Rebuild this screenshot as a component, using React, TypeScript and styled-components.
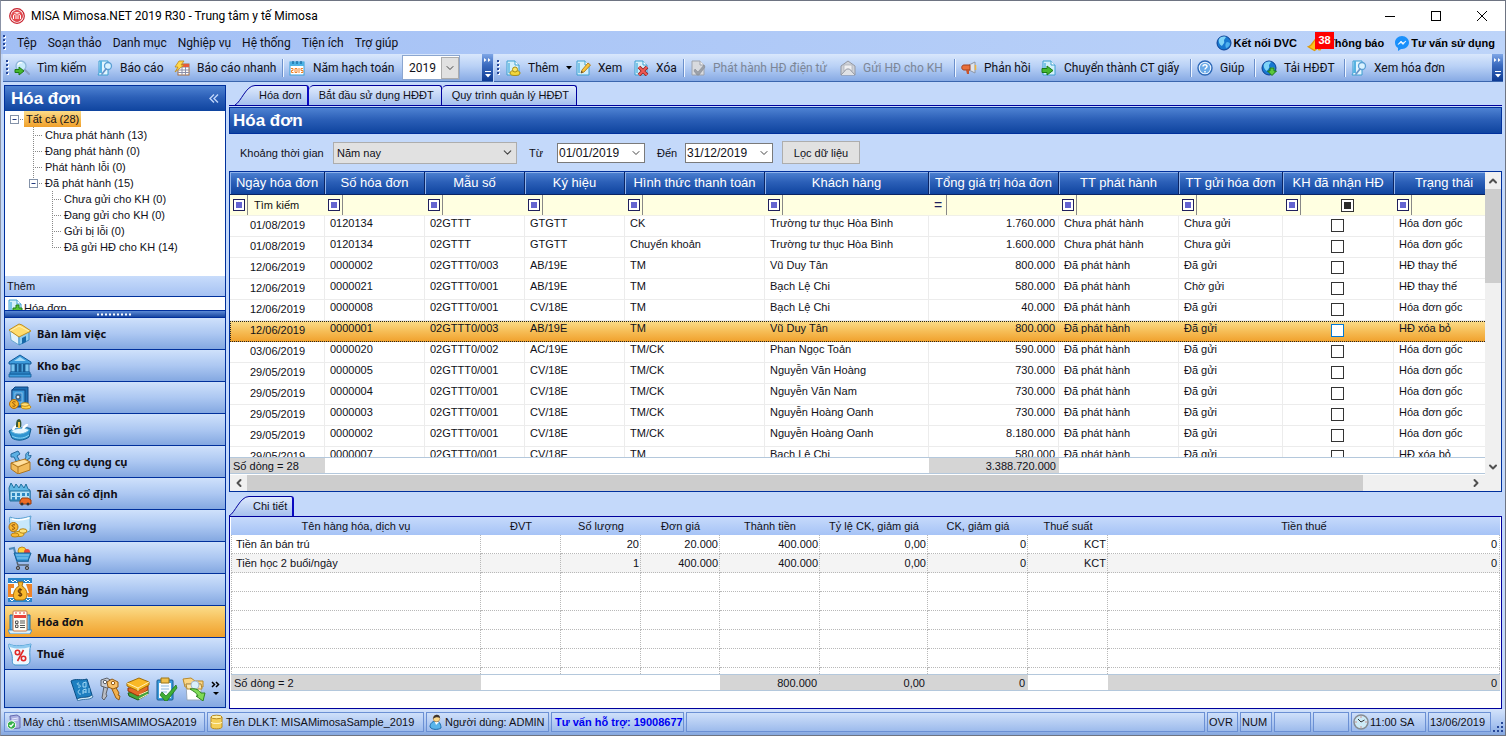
import React from 'react';
import styled, { createGlobalStyle, css } from 'styled-components';
import { ChevronDown, ChevronLeft, ChevronRight, ChevronUp } from 'lucide-react';

const sans = '"Liberation Sans", Arial, sans-serif';
const uiFont = 'Roboto, "Noto Sans", sans-serif';
const navy = '#00309c';

const GlobalStyle = createGlobalStyle`
  *, *::before, *::after { box-sizing: border-box; }
  body { margin: 0; font-family: ${sans}; font-size: 11px; line-height: 14px; color: #101018; }
  button, input, select { font: inherit; color: inherit; margin: 0; }
  button { border: 0; padding: 0; background: none; cursor: pointer; white-space: nowrap; }
  svg { display: block; flex: none; }
  h1, h2 { margin: 0; }
`;

const blueBar = css`background: linear-gradient(#4e82d2, #2c60b8 45%, #0f449f);`;
const softBar = css`background: linear-gradient(#cfe1fb, #adc8f2 50%, #84a8e1);`;
const goldBar = css`background: linear-gradient(#fbdd8a, #f6bd56 50%, #f0a02b);`;

/* ---------- icons ---------- */

const pageShape = (
  <>
    <path d="M2 1h8l4 4v10H2z" fill="#d3effb" stroke="#3c9fd0" />
    <path d="M10 1v4h4" fill="#fff" stroke="#3c9fd0" />
    <path d="M4 3v10" stroke="#7cc5e8" strokeWidth="2" />
  </>
);
const globeShape = (
  <>
    <circle cx="8" cy="8" r="7" fill="#1878d0" stroke="#0b3f92" />
    <path d="M3 4c2-2.500 5-3 7-2-1 2-2 2-2 4 1 2-1 3-2 5-2-1-4-4-3-7z" fill="#7fd4f8" />
    <path d="M11 7c2 0 3 1 3 2-1 3-3 4-4 4-1-2-1-5 1-6z" fill="#4fb1ee" />
  </>
);
const magnifier = (
  <>
    <circle cx="11" cy="6" r="3.500" fill="#d9f2ff" stroke="#5a9fd4" strokeWidth="1.300" />
    <path d="M9 9l-4 5" stroke="#6a94c8" strokeWidth="1.800" strokeLinecap="round" />
  </>
);

const small: Record<string, React.ReactNode> = {
  logo: (
    <>
      <circle cx="8" cy="8" r="7.300" fill="#fff" stroke="#c8202c" strokeWidth="1.200" />
      <circle cx="8" cy="8" r="5.400" fill="#e8484c" stroke="#d8404a" strokeWidth="1" />
      <path d="M4.500 11V8c0-2 2-2 2.500-.5V11M9 11V7.500c.5-1.500 2.500-1.500 2.500.5v3M8 4v2.500M5.500 4.800h5" fill="none" stroke="#fff" strokeWidth="1" />
    </>
  ),
  search: (
    <>
      <circle cx="7" cy="6" r="5" fill="#c9ebfb" stroke="#8fb6d8" strokeWidth="1.300" />
      <path d="M4 5c0-2 2-3 4-2" stroke="#fff" strokeWidth="1.300" />
      <path d="M11 10l4 4" stroke="#8c9fc4" strokeWidth="2" strokeLinecap="round" />
      <path d="M1 9.500h4V7l5 4-5 4v-2.500H1z" fill="#46b82e" stroke="#1d7a18" />
    </>
  ),
  report: (
    <>
      <path d="M2 1h9v14H1l1-2z" fill="#e4f6ff" stroke="#3c9fd0" />
      <path d="M3 1h2v12H2z" fill="#57b3e2" />
      {magnifier}
    </>
  ),
  quick: (
    <>
      <rect x="4" y="4" width="11" height="11" fill="#fff" stroke="#a86c3c" />
      <path d="M4 7h11M4 10h11M4 12.500h11M8 7v8M11.500 7v8" stroke="#8c8fa8" />
      <path d="M8 4h7v3H8z" fill="#e65a3c" />
      <path d="M5 1h5L7 5h3L1 12l3-5H1z" fill="#ffd84a" stroke="#c08a18" strokeWidth=".8" />
    </>
  ),
  calendar: (
    <>
      <rect x="1" y="2" width="14" height="13" fill="#fff" stroke="#3a9fd6" />
      <path d="M1 2h14v4H1z" fill="#4cb2e4" />
      <path d="M4 1v3M8 1v3M12 1v3" stroke="#1c6fa6" strokeWidth="1.400" />
      <path d="M2 8.500h2v2H2.500v2h2M6 8.500h2v4H6zM10 8v5M14 8.500h-2v2h2v2h-2" fill="none" stroke="#f08228" />
    </>
  ),
  add: (<>{pageShape}<ellipse cx="10" cy="13" rx="5" ry="2.500" fill="#f1d63c" stroke="#a88c14" /><circle cx="10" cy="9.500" r="2.500" fill="#f9e768" stroke="#a88c14" /></>),
  edit: (<>{pageShape}<path d="M6 13l1-3 6-7 2.500 2-6.500 7z" fill="#f8c43c" stroke="#b07818" strokeWidth=".9" /><path d="M6 13l.5-2 1.500 1z" fill="#333" /></>),
  del: (<>{pageShape}<path d="M6 7l8 8M14 7l-8 8" stroke="#8c1c20" strokeWidth="3.600" /><path d="M6 7l8 8M14 7l-8 8" stroke="#ee5a54" strokeWidth="2.200" /></>),
  issue: (
    <>
      <path d="M2 1h8l4 4v10H2z" fill="#d8dade" stroke="#9ea3ac" />
      <path d="M10 1v4h4" fill="#f2f2f4" stroke="#9ea3ac" />
      <path d="M5 9l3 3 6-7 1 2-6 8h-2L4 11z" fill="#9ba0a8" stroke="#858a94" strokeWidth=".6" />
    </>
  ),
  mail: (
    <>
      <path d="M1 6l7-5 7 5v9H1z" fill="#cfd2d8" stroke="#9498a2" />
      <path d="M4 5h8v6H4z" fill="#f0f0f2" stroke="#a8acb4" strokeWidth=".7" />
      <path d="M1 15l5.500-6h3L15 15" fill="#dfe1e5" stroke="#9498a2" />
    </>
  ),
  horn: (
    <>
      <path d="M8 5l6-3v11l-6-3z" fill="#dfe4ec" stroke="#8c94a4" />
      <path d="M3 5h6v5H3c-3 0-3-5 0-5z" fill="#e8703c" stroke="#a8401c" />
      <path d="M5 10l1 4h2v-4z" fill="#c8542c" />
      <path d="M14.500 5v5" stroke="#f0b43c" strokeWidth="1.500" />
    </>
  ),
  convert: (<>{pageShape}<path d="M1 8.500h5V6l6 4.500L6 15v-2.500H1z" fill="#46b82e" stroke="#1d7a18" /></>),
  help: (
    <>
      <circle cx="8" cy="8" r="7" fill="#e8f3ff" stroke="#2c68b8" strokeWidth="1.400" />
      <circle cx="8" cy="8" r="5.200" fill="#6aaae8" />
      <path d="M6 6.500c0-2.500 4-2.500 4 0C10 8 8 8 8 9.500M8 11v1.500" fill="none" stroke="#fff" strokeWidth="1.500" />
    </>
  ),
  download: (<>{globeShape}<path d="M9 8h4v3h2.500L11 15.500 6.500 11H9z" fill="#5cc83c" stroke="#1d7a18" /></>),
  globe: globeShape,
  bell: (<><path d="M1 11c4-1 4-6 8-8l4 6c-4 1-5 4-7 5z" fill="#ffc21c" stroke="#e09a08" /><circle cx="10" cy="12.500" r="1.500" fill="#f0a808" /></>),
  chat: (<><path d="M8 1c4 0 7 3 7 6.500S12 14 8 14l-1 0-3 2v-3C2 12 1 10 1 7.500 1 4 4 1 8 1z" fill="#1a90fb" /><path d="M4 9.500L7 6l2 2 3-2-3 3.500-2-2z" fill="#fff" stroke="#fff" strokeWidth=".6" /></>),
  newdoc: (<>{pageShape}<path d="M9 6h3v3h3v3h-3v3H9v-3H6V9h3z" fill="#56c234" stroke="#1d7a18" /></>),
  server: (
    <>
      <path d="M4 2l7-1 3 2v11l-9 1z" fill="#a9aee0" stroke="#666ab0" />
      <path d="M6 5l6-1M6 7l6-1" stroke="#e8eaff" />
      <circle cx="5.500" cy="11" r="4.200" fill="#36b04a" stroke="#fff" />
      <path d="M3.500 11l1.500 1.500L7.500 9.500" fill="none" stroke="#fff" strokeWidth="1.300" />
    </>
  ),
  db: (
    <>
      <path d="M2 3v10c0 2.500 11 2.500 11 0V3z" fill="#f4cf58" stroke="#b98c20" />
      <ellipse cx="7.500" cy="3" rx="5.500" ry="1.800" fill="#fff0a8" stroke="#b98c20" />
      <path d="M2.500 8c0 2 10 2 10 0" fill="none" stroke="#fff3c0" strokeWidth="1.200" />
    </>
  ),
  user: (
    <>
      <path d="M2 13c0-4 3-6 6-6s5 3 5 7c-3 2-9 2-11-1z" fill="#58b4ea" stroke="#1c6cac" />
      <path d="M7 8l1 3 3-3z" fill="#fff" />
      <circle cx="8.500" cy="4.500" r="3.300" fill="#fbd98a" stroke="#b07c3c" strokeWidth=".6" />
      <path d="M5 5c0-5 7-6 7-1-2-1-5-1-7 1z" fill="#3c3430" />
    </>
  ),
  clock: (
    <>
      <circle cx="8" cy="8" r="7" fill="#cdeaf6" stroke="#868c92" strokeWidth="1.500" />
      <path d="M8 8L5 5M8 8l3.500-2" stroke="#333" />
      <path d="M8 2.500v1M8 12.500v1M2.500 8h1M12.500 8h1" stroke="#d04030" />
    </>
  ),
};

const large: Record<string, React.ReactNode> = {
  home: (
    <>
      <path d="M2 9l9 5v9l-8-5z" fill="#e2f2fc" stroke="#6aa8d0" />
      <path d="M11 14l10-6v10l-10 5z" fill="#8fcdf2" stroke="#3f8cc4" />
      <path d="M14 16l4-2v6l-4 2z" fill="#1868a8" />
      <path d="M1 8l10-6 3 1 9 6-12 6z" fill="#ffdc6c" stroke="#c08e20" />
      <path d="M2 9l9-5 10 5" fill="none" stroke="#fff0b0" />
    </>
  ),
  bank: (
    <>
      <path d="M1 8l11-7 11 7v2H1z" fill="#3e9cdc" stroke="#135a98" />
      <path d="M6 7l6-4 6 4z" fill="#a8dcf8" />
      <path d="M4 10h16v8H4z" fill="#1c5c94" />
      <path d="M3 10h4v8H3zM17 10h4v8h-4z" fill="#7cc6f0" stroke="#135a98" strokeWidth=".8" />
      <path d="M9 10h1.500v8H9zM13.500 10H15v8h-1.500z" fill="#4ba4dc" />
      <path d="M2 18h20v2H2zM1 20h22v3H1z" fill="#3e9cdc" stroke="#135a98" strokeWidth=".8" />
    </>
  ),
  safe: (
    <>
      <path d="M4 4l3-3h13v17l-3 3H4z" fill="#1f6fb4" stroke="#0e4480" />
      <rect x="4" y="4" width="13" height="16" fill="#3f9ada" stroke="#0e4480" />
      <rect x="7" y="7" width="7" height="9" fill="#2a7cc0" stroke="#a8d4f0" strokeWidth=".7" />
      <circle cx="10" cy="11" r="2" fill="#e8f2fa" stroke="#345" />
      <circle cx="6" cy="18" r="4.500" fill="#f8b42c" stroke="#b06c10" />
      <path d="M7.500 16c-3-1-4 1-1.500 2s1 3-1.500 2" fill="none" stroke="#8c4c08" />
      <ellipse cx="18" cy="21" rx="5" ry="2" fill="#ffd24a" stroke="#c08c18" />
      <ellipse cx="17" cy="18.500" rx="4" ry="1.800" fill="#ffe07a" stroke="#c08c18" />
    </>
  ),
  boat: (
    <>
      <path d="M1 13c3-2 19-5 22-2l-2 8c-5 4-13 4-17 1z" fill="#2f94d0" stroke="#115c90" />
      <path d="M3 13c4-3 15-4 18-1-3 4-13 6-18 1z" fill="#e6f6ff" stroke="#65b3dc" />
      <path d="M5 12c1-5 4-3 5-6M15 11c1-3 4-3 4-5" fill="none" stroke="#fff" strokeWidth="2.500" />
      <path d="M8 7c0-4 1-6 3-6s3 4 2 8H8z" fill="#385838" /><path d="M10 4h2v6h-2z" fill="#f4c43c" />
      <path d="M4 18c5 3 12 3 17-1" fill="none" stroke="#8cd4f4" />
    </>
  ),
  tools: (
    <>
      <path d="M3 4l7-3 2 3-3 2 5 9-3 2-5-10-3 0z" fill="#5cb0e4" stroke="#25689c" />
      <path d="M15 14l3-7c-1-3 1-5 3-5l-1 3 2 1 1-1c0 3-2 4-3 4l-3 6z" fill="#6cbcec" stroke="#25689c" />
      <path d="M3 13l14-4 5 3v8l-12 4-7-5z" fill="#f2bc5c" stroke="#ab7420" />
      <path d="M3 13l7 4 12-5M10 17v7" fill="none" stroke="#ab7420" />
      <path d="M5 13l11-3 4 2-10 4z" fill="#ffe0a0" />
    </>
  ),
  assets: (
    <>
      <path d="M1 6l2-5 3 5 2-4 3 4 2-4 3 4 2-4 2 5 2 1v11H2z" fill="#5eb6e4" stroke="#21719f" />
      <path d="M2 9h20v9H2z" fill="#b7e3f8" stroke="#21719f" />
      <path d="M4 11h3v3H4zM9 11h3v3H9zM14 11h3v3h-3zM19 11h2v3h-2zM4 15h3v3H4zM9 15h3v3H9z" fill="#2c87c0" />
      <path d="M12 19l2-3h6l3 2 0 4H12z" fill="#ee6c24" stroke="#9c3c0c" />
      <circle cx="14" cy="22" r="1.500" fill="#333" /><circle cx="20" cy="22" r="1.500" fill="#333" />
    </>
  ),
  salary: (
    <>
      <path d="M2 3c7 3 14 1 21-1-2 5 0 10-1 15-7 3-13 1-19 0C4 12 0 8 2 3z" fill="#c8e8fb" stroke="#5aa0d0" />
      <path d="M4 5c6 2 11 1 17-1" stroke="#fff" strokeWidth="1.500" fill="none" />
      <circle cx="5.500" cy="13" r="4.500" fill="#f9b732" stroke="#ae7010" />
      <path d="M7 11c-3-1-4 1-1.500 2S6 16 4 15" fill="none" stroke="#85480a" />
      <ellipse cx="11" cy="20" rx="5" ry="2.500" fill="#ffd552" stroke="#b98412" />
      <ellipse cx="15" cy="17" rx="4" ry="2.200" fill="#ffe37c" stroke="#b98412" />
      <ellipse cx="7" cy="21" rx="4" ry="2" fill="#f9b732" stroke="#b98412" />
    </>
  ),
  cart: (
    <>
      <circle cx="14" cy="5" r="4" fill="#ffd23c" stroke="#c08c18" /><circle cx="19" cy="6" r="3" fill="#e84838" />
      <path d="M1 3l5-1 3 13h12" fill="none" stroke="#4c88b8" strokeWidth="2" />
      <path d="M6 7h17l-3 8H9z" fill="#3f9fdc" stroke="#155e98" />
      <path d="M8 9h13M9 12h11" stroke="#8acbf0" />
      <path d="M9 16l1 3h11" fill="none" stroke="#57626e" strokeWidth="1.500" />
      <circle cx="10" cy="22" r="1.700" fill="#8a8f98" stroke="#444" /><circle cx="19" cy="22" r="1.700" fill="#8a8f98" stroke="#444" />
    </>
  ),
  sales: (
    <>
      <rect x="0" y="0" width="24" height="24" fill="#f4fbff" />
      <path d="M0 0h24v5H0zM0 24v-4h24v4z" fill="#2a86cc" />
      <path d="M3 2l2 2 2-2 2 2M16 2l2 2 2-2 2 2M2 21l2 2 2-2M18 21l2 2 2-2" stroke="#fff" />
      <path d="M0 6h6v4H3v6h4v3H0zM18 6h6v13h-4l-1-4h2z" fill="#f08428" />
      <path d="M10 4h5l-1 4c6 3 7 13 1 14H8C3 20 6 10 11 8z" fill="#f9b92e" stroke="#ac7010" />
      <path d="M14 12c-4-2-5 2-2 3s2 4-2 2M12 10v9" fill="none" stroke="#6c3c08" strokeWidth="1.200" />
    </>
  ),
  invoice: (
    <>
      <path d="M2 5h20v15H2z" fill="#5fb2e6" stroke="#2172ac" />
      <path d="M0 20h24l-2 4H2z" fill="#d9eefa" stroke="#4b93c2" />
      <rect x="5" y="1" width="14" height="20" rx="1" fill="#fffdf6" stroke="#c87848" />
      <path d="M6 5h12v3H6z" fill="#e8443c" /><path d="M7 3h2M11 3h2M15 3h2" stroke="#e8443c" />
      <path d="M7.500 11h2.500v2.500H7.500zM7.500 15h2.500v2.500H7.500z" fill="none" stroke="#555" />
      <path d="M12 11h5M12 13h5M12 15.500h5M12 17.500h5" stroke="#555" />
    </>
  ),
  tax: (
    <>
      <path d="M1 2c6 3 14 2 22 0-2 6-1 11-1 17 0 3-3 4-4 4H7c-4-1-2-5-3-10S0 6 1 2z" fill="#eef8ff" stroke="#3f94cc" />
      <path d="M1 2c6 3 14 2 22 0-1 2-1 2-1 3-7 2-14 2-20 0z" fill="#8fcaf0" />
      <circle cx="9.500" cy="10.500" r="2.200" fill="none" stroke="#e02828" strokeWidth="1.600" />
      <circle cx="15.500" cy="16.500" r="2.200" fill="none" stroke="#e02828" strokeWidth="1.600" />
      <path d="M15.500 8l-6 11" stroke="#e02828" strokeWidth="1.600" />
    </>
  ),
  ledger: (
    <>
      <path d="M1 4c5-3 10 0 16-2l5 16c-5 4-9 1-15 4z" fill="#1e7fc0" stroke="#0c4f86" />
      <path d="M7 22c6-3 10 0 15-4l1 2c-5 4-10 1-15 4z" fill="#d8effb" stroke="#0c4f86" strokeWidth=".7" />
      <path d="M9 6c-3 0-2 2 0 2s2 3-1 2M13 6v4h3V5zM10 13c-3 0-2 5 1 4M13 17v-4l3-1v4M13 15h3M19 11v5" fill="none" stroke="#9fd8f6" />
    </>
  ),
  keys: (
    <>
      <path d="M6 9l-2 12 2 2 2-3 1-1-1-2 2-7z" fill="#b8bcc4" stroke="#5c6068" />
      <path d="M3 3l6-2 5 3v5l-5 2-6-2z" fill="#c8ccd4" stroke="#5c6068" /><circle cx="7" cy="5" r="1.700" fill="#fff" stroke="#5c6068" />
      <path d="M13 10l5 11 3 2 1-4-2-1 1-2-4-7z" fill="#f2b04c" stroke="#935a14" />
      <path d="M9 5l5-3 6 3v5l-5 2-5-2z" fill="#f8c068" stroke="#935a14" /><circle cx="15" cy="6" r="1.700" fill="#fff" stroke="#935a14" />
    </>
  ),
  books: (
    <>
      <path d="M2 16l20-3v4l-10 6-9-4z" fill="#43a63c" stroke="#1d5f1c" />
      <path d="M2 11l20-2v4l-10 6-10-5z" fill="#e46a28" stroke="#8c3508" />
      <path d="M1 6l12-5 10 4v3l-11 6-11-5z" fill="#f9b926" stroke="#a06c08" />
      <path d="M1 6l11 5v3M12 11l11-6M13 18l9-4M13 22l9-5" fill="none" stroke="#fff1b8" />
    </>
  ),
  checklist: (
    <>
      <rect x="3" y="3" width="16" height="20" rx="1" fill="#3c9cdc" stroke="#185c94" />
      <rect x="5" y="6" width="12" height="15" fill="#f8fcff" />
      <path d="M7 1h8v5H7z" fill="#f0c04c" stroke="#9c7414" />
      <path d="M7 9h8M7 12h8M7 15h6" stroke="#8cb8dc" />
      <path d="M8 15l4 4L22 8l1 3-10 13h-2l-5-6z" fill="#3fae34" stroke="#1a6c14" strokeWidth=".7" />
    </>
  ),
  folders: (
    <>
      <path d="M1 2l8-1 4 3 8 0v6H3z" fill="#fbd684" stroke="#b88828" />
      <path d="M4 7h15v16H5z" fill="#fff" stroke="#98a8bc" />
      <path d="M4 7l15 0 1 5H5z" fill="#fae6ae" stroke="#b88828" />
      <circle cx="13" cy="8" r="4" fill="#d9effa" stroke="#a8b8c8" />
      <path d="M8 12c6-1 9 1 11 4h4l-2 8-7-5h2c-1-3-5-5-8-7z" fill="#7fda56" stroke="#2e8420" />
    </>
  ),
};

const Icon = ({ name, size = 16 }: { name: string; size?: number }) =>
  small[name] ? (
    <svg width={size} height={size} viewBox="0 0 16 16" fill="none" aria-hidden="true">{small[name]}</svg>
  ) : (
    <svg width={size} height={size} viewBox="0 0 24 24" fill="none" aria-hidden="true">{large[name]}</svg>
  );

/* ---------- window frame ---------- */

const Window = styled.div`
  display: flex; flex-direction: column; height: 100vh; min-width: 1180px; overflow: hidden;
  background: #c4d9fa; border: 1px solid #6e7482; border-left-color: #8b93a6;
`;
const TitleBar = styled.header`
  display: flex; align-items: center; height: 30px; padding-left: 8px; gap: 6px;
  background: #fff; flex: none;
`;
const TitleText = styled.h1`flex: 1; font: 400 12px/16px ${uiFont}; color: #000;`;
const Controls = styled.div`display: flex;`;
const WindowButton = styled.button`width: 46px; height: 30px; display: grid; place-items: center;`;

const MenuBar = styled.nav`
  display: flex; align-items: center; height: 23px; flex: none; padding: 0 10px 0 1px;
  background: linear-gradient(90deg, #a2bff5, #bdd4f9);
`;
const MenuItem = styled.button`font: 400 12px/16px ${uiFont}; padding: 0 5px 0 6px;`;
const MenuItems = styled.div`display: flex; flex: 1;`;
const Shortcut = styled.a<{ $gap: number }>`
  display: flex; align-items: center; gap: 1px; margin-left: ${p => p.$gap}px;
  font-weight: 700; color: #000; text-decoration: none; white-space: nowrap;
`;
const BadgeAnchor = styled.span`position: relative; display: block;`;
const Badge = styled.span`
  position: absolute; left: 8px; top: -1px; width: 19px; height: 17px;
  background: #f00; color: #fff; text-align: center; line-height: 17px;
`;

const Toolbars = styled.div`display: flex; flex: none; height: 28px; padding: 0 2px; gap: 1px;`;
const Strip = styled.div<{ $grow?: boolean }>`
  display: flex; align-items: center; height: 28px; padding-left: 2px; overflow: hidden;
  flex: ${p => (p.$grow ? '1 1 0' : '0 0 490px')};
  background: linear-gradient(#d9e7fc, #b9d1f6 45%, #87aae4); border-bottom: 1px solid #3b66ae;
`;
const ToolButton = styled.button<{ $w: number }>`
  display: flex; align-items: center; gap: 7px; width: ${p => p.$w}px; flex: none;
  font: 400 12px/16px ${uiFont};
  &:disabled { color: #7c8696; }
`;
const ToolLabel = styled.label`
  display: flex; align-items: center; gap: 8px; width: 113px; flex: none;
  font: 400 12px/16px ${uiFont}; white-space: nowrap;
`;
const Separator = styled.span`
  width: 7px; height: 18px; flex: none; border-left: 1px solid #6b90cc; box-shadow: inset 1px 0 #eef5ff;
`;
const Push = styled.span`flex: 1;`;
const Overflow = styled.button`
  align-self: stretch; width: 11px; flex: none; display: flex; flex-direction: column;
  align-items: center; justify-content: space-between; padding: 4px 0 3px;
  background: linear-gradient(#7ea6e6, #3c6cc0 40%, #0c3a94);
`;

const SelectBox = styled.span<{ $w: number; $plain?: boolean }>`
  display: grid; grid-template-columns: 1fr 18px; align-items: center; width: ${p => p.$w}px;
  height: ${p => (p.$plain ? 25 : 22)}px; flex: none;
  background: ${p => (p.$plain ? '#fff' : '#e1e1e1')}; border: 1px solid ${p => (p.$plain ? '#8ba6d0' : '#adadad')};
  & > select {
    grid-area: 1 / 1 / 2 / 3; appearance: none; border: 0; background: none; height: 100%; width: 100%;
    padding: 0 3px; outline: none; ${p => p.$plain && css`font: 400 12px/16px ${uiFont}; padding-left: 6px;`}
  }
  & > span {
    grid-area: 1 / 2; pointer-events: none; display: grid; place-items: center; color: #444;
    ${p => p.$plain && css`background: #e1e1e1; border: 1px solid #adadad; height: 22px;`}
  }
`;

const Grip = () => (
  <svg width="9" height="20" viewBox="0 0 9 20" aria-hidden="true">
    {[1, 5, 9, 13].map(y => (
      <g key={y}>
        <rect x="2" y={y + 2} width="2" height="2" fill="#fff" />
        <rect x="1" y={y + 1} width="2" height="2" fill="#27489a" />
      </g>
    ))}
  </svg>
);
const OverflowButton = () => (
  <Overflow aria-label="Tùy chọn thanh công cụ">
    <svg width="9" height="5" viewBox="0 0 9 5"><path d="M1 0l2.500 2L1 4zM5 0l2.500 2L5 4z" fill="#fff" /></svg>
    <svg width="9" height="7" viewBox="0 0 9 7"><path d="M2 .5h6" stroke="#fff" /><path d="M2 3h6L5 6.500z" fill="#fff" /></svg>
  </Overflow>
);

/* ---------- workspace ---------- */

const Workspace = styled.div`display: flex; flex: 1; min-height: 0; gap: 3px; padding: 3px 3px 0;`;
const Sidebar = styled.aside`
  display: flex; flex-direction: column; width: 222px; flex: none; margin-bottom: 1px;
  border: 1px solid ${navy}; background: #fff;
`;
const Heading = styled.div<{ $framed?: boolean }>`
  ${blueBar} color: #fff; display: flex; align-items: center; justify-content: space-between; flex: none;
  padding: 0 6px 0 ${p => (p.$framed ? 3 : 6)}px; height: ${p => (p.$framed ? 27 : 25)}px;
  ${p => p.$framed && css`border: 1px solid ${navy};`}
  h2 { font-size: 17px; line-height: 20px; font-weight: 700; }
`;
const Tree = styled.div`flex: 1; min-height: 0; overflow: hidden; padding-left: 5px; background: #fff;`;
const TreeRow = styled.div<{ $depth: number }>`
  display: flex; align-items: center; height: 16px; padding-left: ${p => p.$depth * 19}px; white-space: nowrap;
`;
const TreeLabel = styled.button<{ $active?: boolean }>`
  height: 16px; padding: 0 2px; ${p => p.$active && css`${goldBar}`}
`;
const GroupCaption = styled.div`
  height: 21px; flex: none; padding: 3px 2px; background: linear-gradient(#c8dcfb, #a6c2f3);
  border-bottom: 1px solid ${navy};
`;
const GroupBody = styled.div`height: 13px; flex: none; overflow: hidden; padding: 2px 2px 0;`;
const DocLink = styled.a`display: flex; gap: 1px; color: inherit; text-decoration: none; line-height: 18px;`;
const Splitter = styled.div`
  height: 7px; flex: none; display: grid; place-items: center;
  background: linear-gradient(#5b8ad6, #1746a0); border-top: 1px solid ${navy};
`;
const NavButton = styled.button<{ $active?: boolean }>`
  display: flex; align-items: center; gap: 5px; height: 32px; flex: none; padding-left: 3px; width: 100%;
  border-top: 1px solid ${navy}; font: 700 11px/16px "Noto Sans", sans-serif;
  ${p => (p.$active ? goldBar : softBar)}
`;
const NavFooter = styled.div`
  display: flex; align-items: center; justify-content: flex-end; gap: 4px; height: 38px; flex: none;
  padding-right: 4px; border-top: 1px solid ${navy}; ${softBar}
`;

const Content = styled.main`flex: 1; min-width: 0; display: flex; flex-direction: column;`;
const Tabs = styled.div`display: flex; align-items: flex-end; height: 20px; flex: none; padding-left: 6px;`;
const DetailTabs = styled(Tabs)`height: 24px; padding-left: 0;`;
const TabButton = styled.button`display: flex; height: 20px;`;
const TabFace = styled.span<{ $active?: boolean }>`
  display: block; height: 20px; line-height: 19px; border-top: 1px solid #00009c;
  background: linear-gradient(#e0ebfd, #a5c0ee);
  ${p => p.$active
    ? css`padding: 0 5px 0 2px; border-right: 2px solid #0a0ac0; border-radius: 0 3px 0 0;`
    : css`padding: 0 7px 0 10px; border-right: 1px solid #00009c; border-radius: 5px 3px 0 0;`}
`;
const TabSlope = () => (
  <svg width="22" height="20" viewBox="0 0 22 20" aria-hidden="true">
    <defs><linearGradient id="tab" x2="0" y2="1"><stop stopColor="#e0ebfd" /><stop offset="1" stopColor="#a5c0ee" /></linearGradient></defs>
    <path d="M0 20C6 17 11 .5 20 .5h2V20z" fill="url(#tab)" />
    <path d="M0 20C6 17 11 .5 20 .5h2" fill="none" stroke="#00009c" />
  </svg>
);
const TabRule = styled.div`height: 2px; flex: none; border-top: 1px solid #00009c;`;

const FilterForm = styled.form`
  display: flex; align-items: center; height: 37px; flex: none; padding-left: 11px;
  label { white-space: nowrap; }
`;
const FieldLabel = styled.label<{ $w: number }>`width: ${p => p.$w}px; flex: none;`;
const Gap = styled.span`width: 12px; flex: none;`;
const DateBox = styled.span`
  display: flex; align-items: center; width: 88px; height: 20px; flex: none; background: #fff; border: 1px solid #7a7a7a;
  input { flex: 1; min-width: 0; border: 0; padding: 0 1px; background: none; font-size: 12px; outline: none; }
  button { width: 16px; display: grid; place-items: center; color: #444; }
`;
const FilterButton = styled.button`
  width: 78px; height: 23px; margin-left: 9px; background: #e1e1e1; border: 1px solid #adadad;
`;

const GridPanel = styled.section`
  flex: 1 1 0; min-height: 0; display: flex; flex-direction: column; border: 1px solid ${navy}; background: #fff;
`;
const GridTop = styled.div`flex: 1; min-height: 0; display: flex;`;
const GridView = styled.div`flex: 1; min-width: 0; display: flex; flex-direction: column;`;
const GridScroll = styled.div`flex: 1; min-height: 0; overflow: hidden;`;
const SummaryClip = styled.div`flex: none; overflow: hidden; border-bottom: 1px solid #fff;`;
const DataTable = styled.table`
  table-layout: fixed; border-collapse: separate; border-spacing: 0; width: 100%; min-width: 1265px;
  white-space: nowrap;
  thead th {
    ${blueBar} height: 23px; padding: 0; font-weight: 400; font-size: 13px; color: #fff; overflow: hidden;
    border-right: 1px solid #0a2464; border-bottom: 1px solid #0a2464; box-shadow: inset 1px 1px #8fb2ea;
  }
  thead td { height: 21px; padding: 0; background: #ffffe1; border-bottom: 1px solid #f0f0e8; }
`;
const DataRow = styled.tr<{ $selected?: boolean }>`
  ${p => p.$selected && css`${goldBar} outline: 1px dotted #222; outline-offset: -1px;`}
  td {
    height: 21px; padding: 1px 5px 0; vertical-align: top; line-height: 13px; overflow: hidden;
    border-right: 1px solid ${p => (p.$selected ? 'transparent' : '#ececec')};
    border-bottom: 1px solid ${p => (p.$selected ? 'transparent' : '#ececec')};
  }
  td:first-child { text-align: center; padding-top: 3px; padding-left: 6px; }
  td:nth-child(7) { text-align: right; padding-right: 3px; }
  td:nth-child(10) { text-align: center; padding: 3px 6px 0 4px; }
`;
const CheckBox = styled.input<{ $focus?: boolean }>`
  appearance: none; display: block; width: 13px; height: 13px; margin: 0 auto; background: #fff;
  border: 1px solid ${p => (p.$focus ? '#0078d7' : '#333')};
`;
const FilterCell = styled.div`display: flex; align-items: center; height: 20px; padding-left: 3px;`;
const OperatorButton = styled.button`
  width: 12px; height: 12px; flex: none; display: grid; place-items: center; border: 1px solid #20205c; background: #fff;
  &::after { content: ''; width: 6px; height: 6px; background: #6464d0; }
`;
const EqualButton = styled.button`width: 12px; height: 12px; flex: none; color: #20205c; line-height: 11px; font-size: 14px;`;
const FilterInput = styled.input`
  flex: 1; min-width: 0; height: 20px; margin-left: 2px; border: 0; border-left: 1px solid #888;
  background: none; padding: 0 6px; outline: none;
  &::placeholder { color: #111; opacity: 1; }
`;
const MixedWrap = styled.span`
  flex: 1; margin-left: 2px; height: 20px; border-left: 1px solid #888; display: grid; place-items: center;
`;
const MixedBox = styled.input`
  appearance: none; display: grid; place-items: center; width: 13px; height: 13px; background: #fff; border: 1px solid #333;
  &::after { content: ''; width: 7px; height: 7px; background: #2b2b2b; }
`;
const SummaryTable = styled.table<{ $min?: number }>`
  table-layout: fixed; border-collapse: separate; border-spacing: 0; width: 100%; min-width: ${p => p.$min || 0}px;
  td {
    height: 17px; padding: 0 3px; border-top: 1px solid #b4c8dc; border-bottom: 1px solid #b4c8dc;
    line-height: 14px; text-align: right;
  }
  td:first-child { text-align: left; }
`;
const SumCell = styled.td<{ $on?: boolean }>`background: ${p => (p.$on ? '#d5d5d5' : '#fff')};`;

const VScroll = styled.div`
  width: 16px; flex: none; display: flex; flex-direction: column; background: #f0f0f0; color: #505050;
  button { height: 17px; display: grid; place-items: center; }
`;
const HScroll = styled.div`
  display: flex; height: 16px; flex: none; padding-right: 17px; background: #f0f0f0; color: #505050;
  button { width: 17px; display: grid; place-items: center; }
`;
const Thumb = styled.div<{ $share: string }>`flex: 0 0 ${p => p.$share}; background: #cdcdcd;`;
const Track = styled.div`flex: 1;`;

const DetailPanel = styled.section`
  flex: none; border: 1px solid #00009c; background: #fff; padding: 0 1px 17px; overflow: hidden;
`;
const DetailTable = styled.table`
  table-layout: fixed; border-collapse: separate; border-spacing: 0; width: 100%; white-space: nowrap;
  th { height: 18px; padding: 0; font-weight: 400; background: linear-gradient(#c6dafb, #a6c3f6); }
  td {
    height: 19px; padding: 0 1px; text-align: right; border-right: 1px dotted #b8b8b8; border-bottom: 1px dotted #b8b8b8;
  }
  tr:nth-child(2) td { background: #f4f4f4; }
  td:first-child { text-align: left; padding-left: 4px; border-left: 1px dotted #b8b8b8; }
  td:last-child { padding-right: 2px; }
`;
const StubRow = styled.tr`&& td { height: 6px; border-bottom: 0; }`;

const StatusBar = styled.footer`
  display: flex; align-items: center; gap: 2px; height: 26px; flex: none; padding: 0 0 0 3px;
  background: linear-gradient(#d3e3fb, #a9c4f0 60%, #86a8e0);
`;
const StatusCell = styled.div<{ $w?: number; $strong?: boolean }>`
  display: flex; align-items: center; gap: 1px; height: 20px; padding: 0 2px 0 1px; overflow: hidden; white-space: nowrap;
  flex: ${p => (p.$w ? `0 0 ${p.$w}px` : '1 1 0')};
  border: 1px solid #6b90d4; background: linear-gradient(#cfe0fa, #9dbbec);
  ${p => p.$strong && css`color: #0000f0; font-weight: 700; padding-left: 3px;`}
`;

/* ---------- data ---------- */

const menus = ['Tệp', 'Soạn thảo', 'Danh mục', 'Nghiệp vụ', 'Hệ thống', 'Tiện ích', 'Trợ giúp'];
const tree: { label: string; depth: number; open?: boolean; last?: boolean; active?: boolean }[] = [
  { label: 'Tất cả (28)', depth: 0, open: true, active: true },
  { label: 'Chưa phát hành (13)', depth: 1 },
  { label: 'Đang phát hành (0)', depth: 1 },
  { label: 'Phát hành lỗi (0)', depth: 1 },
  { label: 'Đã phát hành (15)', depth: 1, open: true, last: true },
  { label: 'Chưa gửi cho KH (0)', depth: 2 },
  { label: 'Đang gửi cho KH (0)', depth: 2 },
  { label: 'Gửi bị lỗi (0)', depth: 2 },
  { label: 'Đã gửi HĐ cho KH (14)', depth: 2, last: true },
];
const nav = [
  ['home', 'Bàn làm việc'], ['bank', 'Kho bạc'], ['safe', 'Tiền mặt'], ['boat', 'Tiền gửi'],
  ['tools', 'Công cụ dụng cụ'], ['assets', 'Tài sản cố định'], ['salary', 'Tiền lương'],
  ['cart', 'Mua hàng'], ['sales', 'Bán hàng'], ['invoice', 'Hóa đơn'], ['tax', 'Thuế'],
];
const footerNav = [['ledger', 'Sổ cái'], ['keys', 'Khóa sổ'], ['books', 'Sổ sách'], ['checklist', 'Kiểm tra'], ['folders', 'Kết xuất']];

type Column = [string, number | undefined];
const columns: Column[] = [
  ['Ngày hóa đơn', 95], ['Số hóa đơn', 100], ['Mẫu số', 100], ['Ký hiệu', 100], ['Hình thức thanh toán', 140],
  ['Khách hàng', 164], ['Tổng giá trị hóa đơn', 130], ['TT phát hành', 120], ['TT gửi hóa đơn', 104],
  ['KH đã nhận HĐ', 111], ['Trạng thái', undefined],
];
const rows = [
  ['01/08/2019', '0120134', '02GTTT', 'GTGTT', 'CK', 'Trường tư thục Hòa Bình', '1.760.000', 'Chưa phát hành', 'Chưa gửi', 'Hóa đơn gốc'],
  ['01/08/2019', '0120134', '02GTTT', 'GTGTT', 'Chuyển khoản', 'Trường tư thục Hòa Bình', '1.600.000', 'Chưa phát hành', 'Chưa gửi', 'Hóa đơn gốc'],
  ['12/06/2019', '0000002', '02GTTT0/003', 'AB/19E', 'TM', 'Vũ Duy Tân', '800.000', 'Đã phát hành', 'Đã gửi', 'HĐ thay thế'],
  ['12/06/2019', '0000021', '02GTTT0/001', 'AB/19E', 'TM', 'Bạch Lệ Chi', '580.000', 'Đã phát hành', 'Chờ gửi', 'HĐ thay thế'],
  ['12/06/2019', '0000008', '02GTTT0/001', 'CV/18E', 'TM', 'Bạch Lệ Chi', '40.000', 'Đã phát hành', 'Đã gửi', 'Hóa đơn gốc'],
  ['12/06/2019', '0000001', '02GTTT0/003', 'AB/19E', 'TM', 'Vũ Duy Tân', '800.000', 'Đã phát hành', 'Đã gửi', 'HĐ xóa bỏ'],
  ['03/06/2019', '0000020', '02GTTT0/002', 'AC/19E', 'TM/CK', 'Phan Ngọc Toản', '590.000', 'Đã phát hành', 'Đã gửi', 'Hóa đơn gốc'],
  ['29/05/2019', '0000005', '02GTTT0/001', 'CV/18E', 'TM/CK', 'Nguyễn Văn Hoàng', '730.000', 'Đã phát hành', 'Đã gửi', 'Hóa đơn gốc'],
  ['29/05/2019', '0000004', '02GTTT0/001', 'CV/18E', 'TM/CK', 'Nguyễn Văn Nam', '730.000', 'Đã phát hành', 'Đã gửi', 'Hóa đơn gốc'],
  ['29/05/2019', '0000003', '02GTTT0/001', 'CV/18E', 'TM/CK', 'Nguyễn Hoàng Oanh', '730.000', 'Đã phát hành', 'Đã gửi', 'Hóa đơn gốc'],
  ['29/05/2019', '0000002', '02GTTT0/001', 'CV/18E', 'TM/CK', 'Nguyễn Hoàng Oanh', '8.180.000', 'Đã phát hành', 'Đã gửi', 'Hóa đơn gốc'],
  ['29/05/2019', '0000007', '02GTTT0/001', 'CV/18E', 'TM', 'Bạch Lệ Chi', '580.000', 'Đã phát hành', 'Đã gửi', 'HĐ xóa bỏ'],
];
const detailColumns: Column[] = [
  ['Tên hàng hóa, dịch vụ', 250], ['ĐVT', 80], ['Số lượng', 80], ['Đơn giá', 79], ['Thành tiền', 100],
  ['Tỷ lệ CK, giảm giá', 108], ['CK, giảm giá', 100], ['Thuế suất', 80], ['Tiền thuế', undefined],
];
const detailRows = [
  ['Tiền ăn bán trú', '', '20', '20.000', '400.000', '0,00', '0', 'KCT', '0'],
  ['Tiền học 2 buổi/ngày', '', '1', '400.000', '400.000', '0,00', '0', 'KCT', '0'],
];
const gridSums = ['Số dòng = 28', '', '', '', '', '', '3.388.720.000', '', '', '', ''];
const detailSums = ['Số dòng = 2', '', '', '', '800.000', '0,00', '0', '', '0'];

const Cols = ({ list }: { list: Column[] }) => (
  <colgroup>{list.map(([n, w]) => <col key={n} width={w} />)}</colgroup>
);

const Tool = ({ icon, w, children, disabled, caret }: { icon: string; w: number; children: string; disabled?: boolean; caret?: boolean }) => (
  <ToolButton $w={w} disabled={disabled}>
    <Icon name={icon} />
    {children}
    {caret && <svg width="6" height="4" viewBox="0 0 6 4"><path d="M0 0h6L3 3.500z" fill="#000" /></svg>}
  </ToolButton>
);

const TreeLine = ({ item }: { item: (typeof tree)[number] }) => (
  <TreeRow $depth={item.depth}>
    {item.open ? (
      <svg width="14" height="16" viewBox="0 0 14 16" aria-hidden="true">
        <path d="M10 8.500h4" stroke="#888" strokeDasharray="1 1" />
        {item.depth > 0 && <path d="M4.500 0v4" stroke="#888" strokeDasharray="1 1" />}
        <rect x=".5" y="4.500" width="8" height="8" fill="#fff" stroke="#8492a8" />
        <path d="M2.500 8.500h4" stroke="#243c80" />
      </svg>
    ) : (
      <svg width="14" height="16" viewBox="0 0 14 16" aria-hidden="true">
        <path d={`M4.500 0V${item.last ? 8 : 16}`} stroke="#888" strokeDasharray="1 1" />
        <path d="M4 8.500h10" stroke="#888" strokeDasharray="1 1" />
      </svg>
    )}
    <TreeLabel $active={item.active}>{item.label}</TreeLabel>
  </TreeRow>
);

const SizeGrip = () => (
  <svg width="12" height="24" viewBox="0 0 12 24" aria-hidden="true">
    <path d="M8 12h2v2H8zM4 16h2v2H4zM8 16h2v2H8zM0 20h2v2H0zM4 20h2v2H4zM8 20h2v2H8z" fill="#27489a" />
  </svg>
);
const WindowControls = () => (
  <Controls>
    <WindowButton aria-label="Thu nhỏ"><svg width="10" height="10"><path d="M0 5.500h10" stroke="#000" /></svg></WindowButton>
    <WindowButton aria-label="Phóng to"><svg width="10" height="10"><rect x=".5" y=".5" width="9" height="9" fill="none" stroke="#000" /></svg></WindowButton>
    <WindowButton aria-label="Đóng"><svg width="10" height="10"><path d="M0 0l10 10M10 0L0 10" stroke="#000" /></svg></WindowButton>
  </Controls>
);

export default function App() {
  return (
    <Window>
      <GlobalStyle />
      <TitleBar>
        <Icon name="logo" />
        <TitleText>MISA Mimosa.NET 2019 R30 - Trung tâm y tế Mimosa</TitleText>
        <WindowControls />
      </TitleBar>
      <MenuBar>
        <Grip />
        <MenuItems>{menus.map(m => <MenuItem key={m}>{m}</MenuItem>)}</MenuItems>
        <Shortcut href="#dvc" $gap={0}><Icon name="globe" />Kết nối DVC</Shortcut>
        <Shortcut href="#thongbao" $gap={10}>
          <BadgeAnchor><Icon name="bell" size={20} /><Badge>38</Badge></BadgeAnchor>Thông báo
        </Shortcut>
        <Shortcut href="#tuvan" $gap={10}><Icon name="chat" />Tư vấn sử dụng</Shortcut>
      </MenuBar>
      <Toolbars>
        <Strip>
          <Grip />
          <Tool icon="search" w={83}>Tìm kiếm</Tool>
          <Tool icon="report" w={77}>Báo cáo</Tool>
          <Tool icon="quick" w={108}>Báo cáo nhanh</Tool>
          <Separator />
          <ToolLabel htmlFor="year"><Icon name="calendar" />Năm hạch toán</ToolLabel>
          <SelectBox $w={58} $plain>
            <select id="year" defaultValue="2019"><option>2019</option></select>
            <span><ChevronDown size={12} strokeWidth={2} /></span>
          </SelectBox>
          <Push />
          <OverflowButton />
        </Strip>
        <Strip $grow>
          <Grip />
          <Tool icon="add" w={70} caret>Thêm</Tool>
          <Tool icon="edit" w={58}>Xem</Tool>
          <Tool icon="del" w={50}>Xóa</Tool>
          <Separator />
          <Tool icon="issue" w={150} disabled>Phát hành HĐ điện tử</Tool>
          <Tool icon="mail" w={114} disabled>Gửi HĐ cho KH</Tool>
          <Separator />
          <Tool icon="horn" w={80}>Phản hồi</Tool>
          <Tool icon="convert" w={149}>Chuyển thành CT giấy</Tool>
          <Separator />
          <Tool icon="help" w={57}>Giúp</Tool>
          <Separator />
          <Tool icon="download" w={83}>Tải HĐĐT</Tool>
          <Separator />
          <Tool icon="report" w={100}>Xem hóa đơn</Tool>
          <Push />
          <OverflowButton />
        </Strip>
      </Toolbars>

      <Workspace>
        <Sidebar>
          <Heading>
            <h2>Hóa đơn</h2>
            <button aria-label="Thu gọn">
              <svg width="10" height="9" viewBox="0 0 10 9"><path d="M5 .5l-4 4 4 4M9 .5l-4 4 4 4" fill="none" stroke="#c0d6fb" strokeWidth="1.400" /></svg>
            </button>
          </Heading>
          <Tree>{tree.map(t => <TreeLine key={t.label} item={t} />)}</Tree>
          <GroupCaption>Thêm</GroupCaption>
          <GroupBody><DocLink href="#hoadon"><Icon name="newdoc" />Hóa đơn</DocLink></GroupBody>
          <Splitter>
            <svg width="36" height="3" viewBox="0 0 36 3"><path d="M0 1.500h36" stroke="#fff" strokeWidth="2" strokeDasharray="2 2" /></svg>
          </Splitter>
          {nav.map(([icon, label]) => (
            <NavButton key={icon} $active={icon === 'invoice'}><Icon name={icon} size={24} />{label}</NavButton>
          ))}
          <NavFooter>
            {footerNav.map(([icon, label]) => <button key={icon} aria-label={label}><Icon name={icon} size={24} /></button>)}
            <button aria-label="Cấu hình">
              <svg width="11" height="16" viewBox="0 0 11 16"><path d="M2 1l2.500 2.500L2 6M6 1l2.500 2.500L6 6" fill="none" stroke="#000" strokeWidth="1.500" /><path d="M3 11h6l-3 3z" fill="#000" /></svg>
            </button>
          </NavFooter>
        </Sidebar>

        <Content>
          <Tabs role="tablist">
            <TabButton role="tab" aria-selected><TabSlope /><TabFace $active>Hóa đơn</TabFace></TabButton>
            <TabButton role="tab"><TabFace>Bắt đầu sử dụng HĐĐT</TabFace></TabButton>
            <TabButton role="tab"><TabFace>Quy trình quản lý HĐĐT</TabFace></TabButton>
          </Tabs>
          <TabRule />
          <Heading $framed><h2>Hóa đơn</h2></Heading>
          <FilterForm>
            <FieldLabel $w={93} htmlFor="range">Khoảng thời gian</FieldLabel>
            <SelectBox $w={184}>
              <select id="range" defaultValue="Năm nay"><option>Năm nay</option></select>
              <span><ChevronDown size={13} strokeWidth={2} /></span>
            </SelectBox>
            <Gap />
            <FieldLabel $w={28} htmlFor="from">Từ</FieldLabel>
            <DateBox>
              <input id="from" defaultValue="01/01/2019" />
              <button type="button" aria-label="Chọn ngày bắt đầu"><ChevronDown size={12} strokeWidth={2} /></button>
            </DateBox>
            <Gap />
            <FieldLabel $w={28} htmlFor="to">Đến</FieldLabel>
            <DateBox>
              <input id="to" defaultValue="31/12/2019" />
              <button type="button" aria-label="Chọn ngày kết thúc"><ChevronDown size={12} strokeWidth={2} /></button>
            </DateBox>
            <FilterButton type="button">Lọc dữ liệu</FilterButton>
          </FilterForm>

          <GridPanel>
            <GridTop>
              <GridView>
                <GridScroll>
                  <DataTable>
                    <Cols list={columns} />
                    <thead>
                      <tr>{columns.map(([n]) => <th key={n} scope="col">{n}</th>)}</tr>
                      <tr>
                        {columns.map(([n], i) => (
                          <td key={n}>
                            <FilterCell>
                              {i === 6 ? <EqualButton aria-label="Bằng">=</EqualButton> : <OperatorButton aria-label={`Điều kiện lọc ${n}`} />}
                              {i === 9
                                ? <MixedWrap><MixedBox type="checkbox" aria-label={n} /></MixedWrap>
                                : <FilterInput aria-label={`Lọc ${n}`} placeholder={i === 0 ? 'Tìm kiếm' : ''} />}
                            </FilterCell>
                          </td>
                        ))}
                      </tr>
                    </thead>
                    <tbody>
                      {rows.map((r, i) => (
                        <DataRow key={i} $selected={i === 5}>
                          {r.slice(0, 9).map((c, j) => <td key={j}>{c}</td>)}
                          <td><CheckBox type="checkbox" $focus={i === 5} aria-label={`Khách hàng đã nhận hóa đơn ${r[1]}`} /></td>
                          <td>{r[9]}</td>
                        </DataRow>
                      ))}
                    </tbody>
                  </DataTable>
                </GridScroll>
                <SummaryClip>
                  <SummaryTable $min={1265}>
                    <Cols list={columns} />
                    <tbody><tr>{gridSums.map((s, i) => <SumCell key={i} $on={!!s}>{s}</SumCell>)}</tr></tbody>
                  </SummaryTable>
                </SummaryClip>
              </GridView>
              <VScroll>
                <button aria-label="Cuộn lên"><ChevronUp size={12} strokeWidth={4} /></button>
                <Thumb $share="31%" />
                <Track />
                <button aria-label="Cuộn xuống"><ChevronDown size={12} strokeWidth={4} /></button>
              </VScroll>
            </GridTop>
            <HScroll>
              <button aria-label="Cuộn trái"><ChevronLeft size={12} strokeWidth={4} /></button>
              <Thumb $share="89%" />
              <Track />
              <button aria-label="Cuộn phải"><ChevronRight size={12} strokeWidth={4} /></button>
            </HScroll>
          </GridPanel>

          <DetailTabs role="tablist">
            <TabButton role="tab" aria-selected><TabSlope /><TabFace $active>Chi tiết</TabFace></TabButton>
          </DetailTabs>
          <DetailPanel>
            <DetailTable>
              <Cols list={detailColumns} />
              <thead><tr>{detailColumns.map(([n]) => <th key={n} scope="col">{n}</th>)}</tr></thead>
              <tbody>
                {detailRows.map((r, i) => <tr key={i}>{r.map((c, j) => <td key={j}>{c}</td>)}</tr>)}
                {[0, 1, 2, 3, 4].map(i => <tr key={i}>{detailColumns.map(([n]) => <td key={n} />)}</tr>)}
                <StubRow>{detailColumns.map(([n]) => <td key={n} />)}</StubRow>
              </tbody>
            </DetailTable>
            <SummaryTable>
              <Cols list={detailColumns} />
              <tbody><tr>{detailSums.map((s, i) => <SumCell key={i} $on={!!s}>{s}</SumCell>)}</tr></tbody>
            </SummaryTable>
          </DetailPanel>
        </Content>
      </Workspace>

      <StatusBar>
        <StatusCell $w={201}><Icon name="server" />Máy chủ : ttsen\MISAMIMOSA2019</StatusCell>
        <StatusCell $w={217}><Icon name="db" />Tên DLKT: MISAMimosaSample_2019</StatusCell>
        <StatusCell $w={123}><Icon name="user" />Người dùng: ADMIN</StatusCell>
        <StatusCell $w={133} $strong>Tư vấn hỗ trợ: 19008677</StatusCell>
        <StatusCell />
        <StatusCell $w={31}>OVR</StatusCell>
        <StatusCell $w={32}>NUM</StatusCell>
        <StatusCell $w={37} />
        <StatusCell $w={36} />
        <StatusCell $w={75}><Icon name="clock" />11:00 SA</StatusCell>
        <StatusCell $w={63}>13/06/2019</StatusCell>
        <SizeGrip />
      </StatusBar>
    </Window>
  );
}
